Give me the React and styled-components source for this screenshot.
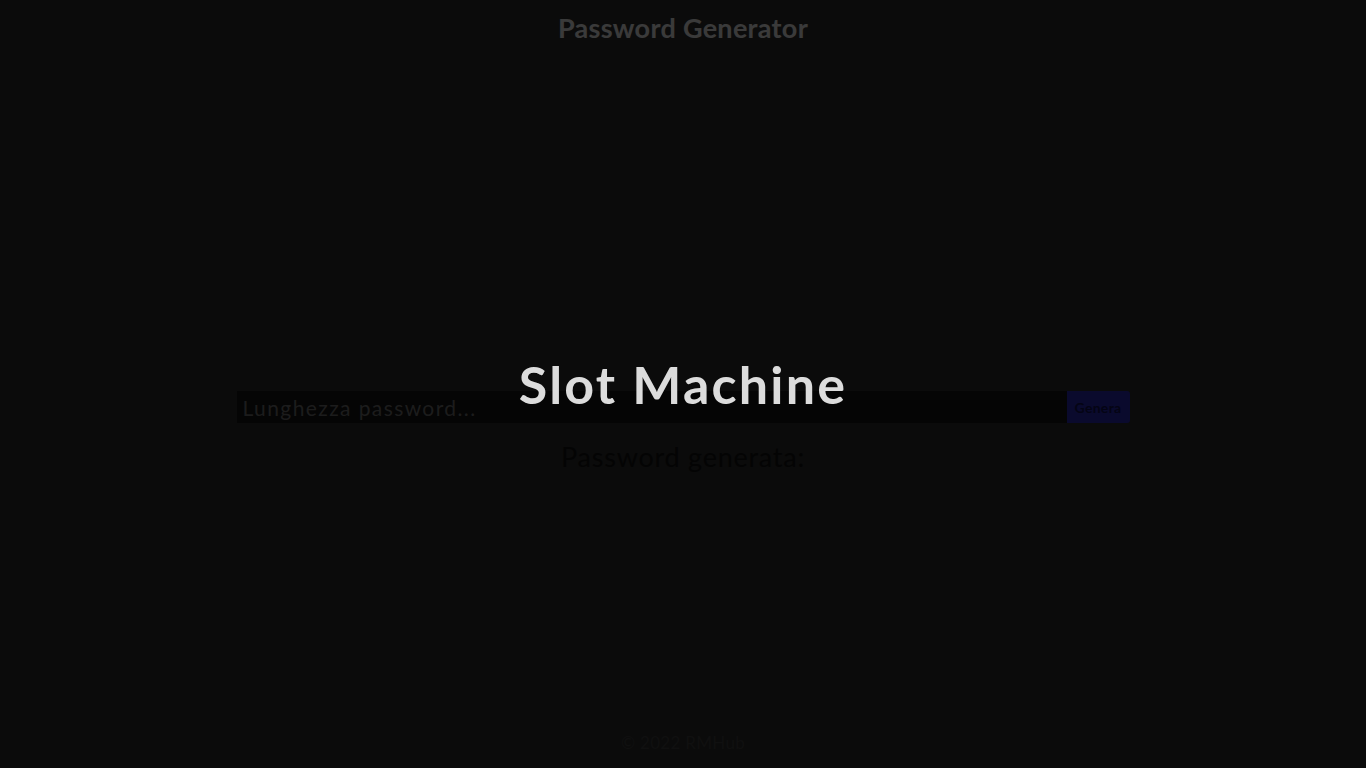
import React from "react";
import styled, { createGlobalStyle } from "styled-components";

const GlobalStyle = createGlobalStyle`
  html, body { margin: 0; padding: 0; background: #2c2c2c; }
  body { font-family: "Lato", "Open Sans", sans-serif; }
  * { box-sizing: border-box; }
`;

const Page = styled.div`
  min-height: 100vh;
  display: flex;
  flex-direction: column;
  background: #2c2c2c;
`;

const Header = styled.header`
  height: 54px;
  display: flex;
  align-items: center;
  justify-content: center;
`;

const Brand = styled.h1`
  margin: 0;
  font-family: "Lato", sans-serif;
  font-weight: 700;
  font-size: 27px;
  letter-spacing: 0.3px;
  color: #e8e8e8;
`;

const Main = styled.main`
  flex: 1;
  display: flex;
  flex-direction: column;
  align-items: center;
  padding-top: 337px;
`;

const Form = styled.form`
  width: 893px;
  display: flex;
  height: 32px;
`;

const Input = styled.input`
  flex: 1;
  height: 100%;
  border: none;
  outline: none;
  background: #141414;
  padding: 0 6px;
  font-family: "Lato", sans-serif;
  font-size: 21px;
  letter-spacing: 1.4px;
  color: #e8e8e8;
  &::placeholder { color: #707070; }
`;

const Button = styled.button`
  width: 63px;
  height: 100%;
  border: none;
  border-radius: 0 3px 3px 0;
  background: #2828b4;
  color: #101050;
  font-family: "Lato", sans-serif;
  font-weight: 700;
  font-size: 14px;
  letter-spacing: 0.3px;
  padding: 0;
`;

const Result = styled.h2`
  margin: 17px 0 0;
  font-family: "Lato", sans-serif;
  font-weight: 400;
  font-size: 27px;
  letter-spacing: 0.75px;
  color: #101010;
`;

const Footer = styled.footer`
  height: 52px;
  display: flex;
  align-items: center;
  justify-content: center;
  font-family: "Lato", sans-serif;
  font-size: 17px;
  letter-spacing: 0.3px;
  color: #404040;
`;

const Overlay = styled.div`
  position: fixed;
  inset: 0;
  background: rgba(0, 0, 0, 0.75);
  display: flex;
  align-items: center;
  justify-content: center;
`;

const OverlayTitle = styled.div`
  font-family: "Lato", sans-serif;
  font-weight: 700;
  font-size: 52px;
  letter-spacing: 2.2px;
  color: #dcdcdc;
`;

export default function App() {
  return (
    <>
      <GlobalStyle />
      <Page>
        <Header>
          <Brand>Password Generator</Brand>
        </Header>
        <Main>
          <Form onSubmit={(e) => e.preventDefault()}>
            <Input type="number" placeholder="Lunghezza password..." />
            <Button type="submit">Genera</Button>
          </Form>
          <Result>Password generata:</Result>
        </Main>
        <Footer>© 2022 RMHub</Footer>
      </Page>
      <Overlay>
        <OverlayTitle>Slot Machine</OverlayTitle>
      </Overlay>
    </>
  );
}
